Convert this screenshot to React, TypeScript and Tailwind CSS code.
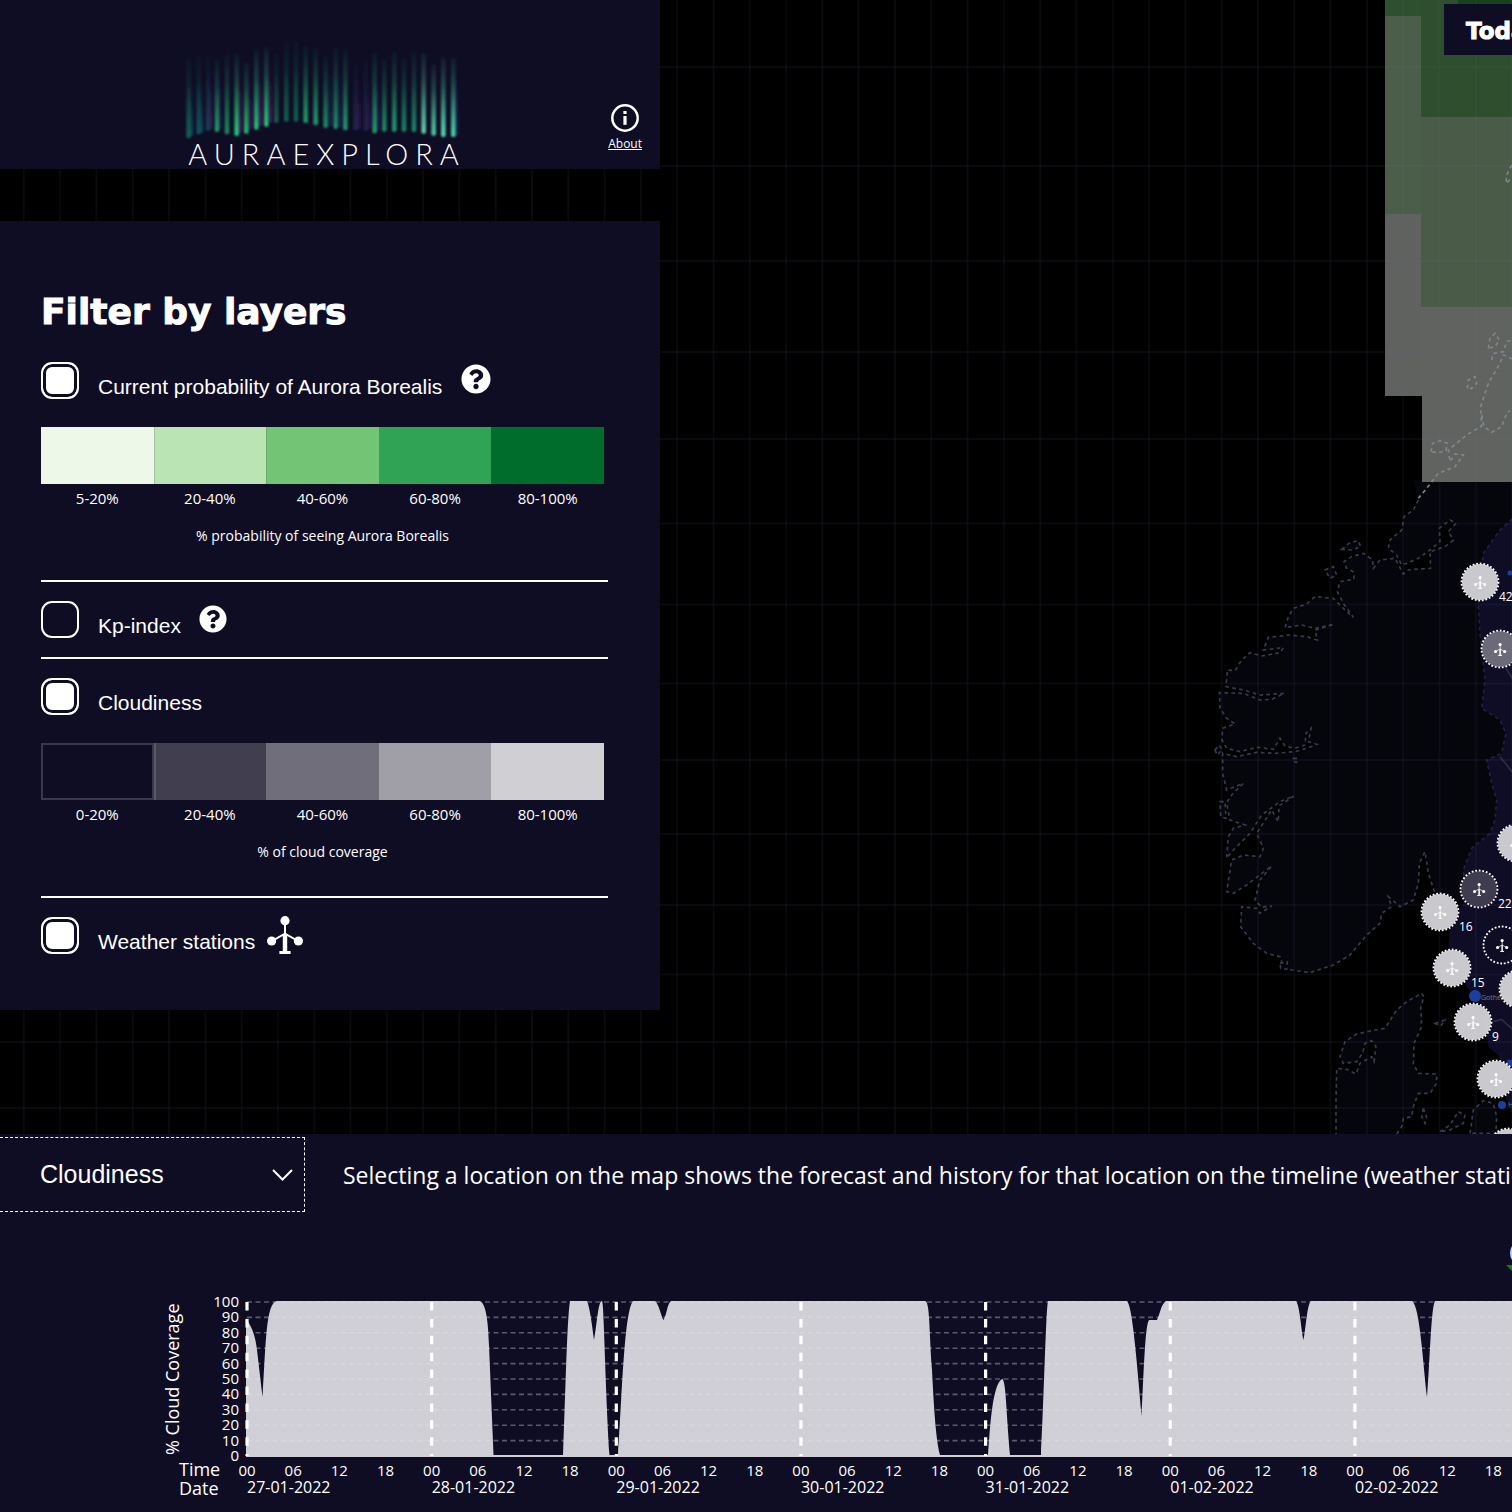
import React, { useState } from "react";

const segoe = "font-['Open_Sans',sans-serif]";

/* ---------- logo ---------- */
type Bar = [x: number, top: number, bottom: number, color: string];
const bars: Bar[] = [
  [87, 110, 352, "#12605a"], [117, 105, 340, "#11535a"], [145, 100, 330, "#173f50"], [172, 115, 333, "#1f9a62"],
  [202, 100, 340, "#1c8560"], [231, 100, 345, "#24c877"], [260, 125, 338, "#22b871"], [290, 85, 326, "#22c077"],
  [320, 78, 317, "#24c47c"], [350, 95, 306, "#15584d"], [380, 62, 302, "#11604f"], [409, 60, 302, "#11604f"],
  [438, 75, 306, "#1a9a66"], [468, 82, 313, "#1d9a68"], [498, 105, 321, "#1c8a62"], [528, 80, 324, "#1c8a66"],
  [557, 85, 328, "#20966a"], [588, 115, 328, "#1d2a44"], [618, 90, 330, "#1d2444"], [645, 95, 337, "#229a6c"],
  [674, 115, 332, "#1d8a62"], [704, 90, 332, "#1f9a6c"], [733, 110, 332, "#1a8560"], [763, 90, 333, "#1f8566"],
  [792, 95, 338, "#5fd0a8"], [822, 130, 344, "#50c8a0"], [851, 110, 348, "#58d8b0"], [881, 110, 348, "#4ad0a4"],
];
const glows: Bar[] = [
  [152, 150, 325, "#36145e"], [242, 150, 335, "#46165a"], [272, 170, 325, "#421254"], [302, 130, 315, "#461658"],
  [332, 130, 305, "#44164e"], [180, 150, 325, "#221650"], [597, 170, 325, "#300f58"], [626, 170, 325, "#300f58"],
  [540, 150, 320, "#162450"], [512, 140, 315, "#162448"], [890, 150, 345, "#162050"], [95, 190, 345, "#143658"],
  [125, 190, 335, "#143658"], [655, 170, 330, "#201a50"],
];

function Logo() {
  const all = [...glows, ...bars];
  return (
    <div className="flex w-[290px] flex-col items-center">
      <svg width="290" height="112" viewBox="43 30 870 336" aria-hidden="true">
        <defs>
          <filter id="soft" x="-200%" width="500%" y="-10%" height="120%">
            <feGaussianBlur stdDeviation="3.6" />
          </filter>
          {all.map(([, , , c], i) => (
            <linearGradient key={i} id={`bar${i}`} x1="0" y1="0" x2="0" y2="1">
              <stop offset="0" stopColor={c} stopOpacity="0.06" />
              <stop offset="0.35" stopColor={c} stopOpacity="0.28" />
              <stop offset="0.75" stopColor={c} stopOpacity="0.75" />
              <stop offset="1" stopColor={c} />
            </linearGradient>
          ))}
        </defs>
        {all.map(([x, t, b], i) => (
          <rect key={i} x={x - 7} y={t} width="14" height={b - t} rx="6" fill={`url(#bar${i})`} filter="url(#soft)" />
        ))}
      </svg>
      <span className="-mt-1 pl-4 font-['Lato',sans-serif] text-[29px] leading-[30px] font-light tracking-[0.24em]">AURAEXPLORA</span>
    </div>
  );
}

/* ---------- icons ---------- */
function InfoIcon() {
  return (
    <svg width="28" height="28" viewBox="0 0 28 28" aria-hidden="true">
      <circle cx="14" cy="14" r="12.7" fill="none" stroke="#fff" strokeWidth="2.5" />
      <rect x="12.4" y="12" width="3.2" height="8.8" fill="#fff" />
      <rect x="12.4" y="7" width="3.2" height="3" fill="#fff" />
    </svg>
  );
}

function HelpIcon({ size }: { size: number }) {
  return (
    <svg width={size} height={size} viewBox="0 0 512 512" aria-hidden="true">
      <path
        fill="#fff"
        d="M504 256c0 136.997-111.043 248-248 248S8 392.997 8 256C8 119.083 119.043 8 256 8s248 111.083 248 248zM262.655 90c-54.497 0-89.255 22.957-116.549 63.758-3.536 5.286-2.353 12.415 2.715 16.258l34.699 26.31c5.205 3.947 12.621 3.008 16.665-2.122 17.864-22.658 30.113-35.797 57.303-35.797 20.429 0 45.698 13.148 45.698 32.958 0 14.976-12.363 22.667-32.534 33.976C247.128 238.528 216 254.941 216 296v4c0 6.627 5.373 12 12 12h56c6.627 0 12-5.373 12-12v-1.333c0-28.462 83.186-29.647 83.186-106.667 0-58.002-60.165-102-116.531-102zM256 338c-25.365 0-46 20.635-46 46 0 25.364 20.635 46 46 46s46-20.636 46-46c0-25.365-20.635-46-46-46z"
      />
    </svg>
  );
}

function StationShape() {
  return (
    <g fill="#fff" stroke="none">
      <circle cx="18" cy="4.7" r="4.6" />
      <circle cx="4.6" cy="25" r="4.6" />
      <circle cx="31.4" cy="25" r="4.6" />
      <path d="M5 25 18 17.6 31 25" fill="none" stroke="#fff" strokeWidth="2" />
      <rect x="17" y="6" width="2" height="14" />
      <rect x="15.8" y="18" width="4.4" height="18" />
      <rect x="12.4" y="35" width="11.2" height="3" />
    </g>
  );
}

/* ---------- map ---------- */
const gridX = Array.from({ length: 60 }, (_, i) => 23.8 + i * 36.3);
const gridY = [67, 166, 261, 352, 439, 523.5, 604.5, 683.5, 760, 834, 905, 974.5, 1042, 1108];

const norway =
  "M655 0 640 30 612 50 605 90 570 120 565 145 590 165 605 195 620 190 655 175 690 150 720 125 718 85 750 60 768 70 745 95 760 120 735 140 690 155 692 205 655 207 625 210 610 222 585 175 540 180 520 205 518 180 490 160 455 170 432 185 440 205 460 215 462 238 420 245 412 275 430 310 460 352 440 335 400 295 345 290 320 312 280 325 265 350 255 383 305 375 345 385 402 373 345 390 352 420 320 410 270 405 205 412 190 450 250 443 240 458 185 468 150 458 125 480 105 512 82 510 78 560 130 570 180 585 253 580 215 598 180 600 130 580 58 578 60 625 80 655 105 672 68 685 66 720 80 745 120 755 170 742 220 748 240 715 255 738 285 745 315 735 318 700 333 685 325 725 350 733 320 745 285 755 225 760 170 757 110 770 68 760 68 820 80 870 130 850 90 890 80 910 90 960 135 975 100 985 85 1010 80 1075 100 1050 150 1000 185 945 240 905 282 888 237 918 235 965 215 930 170 1000 190 1045 180 1070 130 1065 95 1080 80 1175 100 1180 140 1155 215 1098 180 1140 165 1200 185 1222 215 1218 180 1240 170 1225 125 1220 122 1280 160 1330 200 1360 240 1370 250 1400 275 1410 330 1418 400 1395 450 1365 500 1305 540 1270 545 1240 575 1220 565 1190 600 1220 640 1200 655 1150 658 1090 675 1055 685 1120 705 1180 750 1210";
const border =
  "800 1190 790 1110 815 1045 870 1000 885 960 890 900 875 850 860 780 905 760 918 700 900 660 845 625 855 540 840 400 835 310 850 160 900 90 945 50";
const sweden = `M${border} 945 1860 900 1750 900 1670 865 1640 850 1520 800 1460 770 1390 745 1340 750 1280Z`;
const denmark =
  "M408 1910 408 1800 410 1705 440 1708 468 1722 480 1690 515 1670 522 1685 528 1640 515 1622 495 1630 488 1660 470 1685 430 1690 420 1670 435 1625 470 1602 515 1592 555 1585 590 1530 620 1505 665 1480 672 1490 662 1520 665 1580 642 1630 640 1690 655 1720 710 1722 710 1750 690 1780 655 1780 640 1820 635 1850 610 1855 605 1880 585 1910";
const islands = [
  "M425 148 450 128 475 122 482 140 455 150Z",
  "M375 210 400 200 410 225 390 235Z",
  "M45 750 58 735 66 750 52 765Z",
  "M280 775 292 775 290 787 280 785Z",
  "M60 905 75 905 78 955 62 950Z",
  "M240 1390 262 1385 260 1408 242 1405Z",
  "M705 1570 735 1560 722 1578Z",
  "M670 1825 680 1850 675 1870 665 1850Z",
  "M720 1895 750 1875 775 1835 795 1845 790 1870 750 1890Z",
  "M810 1900 820 1830 850 1802 880 1810 890 1850 888 1900Z",
];
const northCoast = [
  "M175 1495 200 1465 235 1420 285 1400 310 1365 285 1362 270 1385 265 1350 320 1305 365 1278 362 1220 385 1150 420 1090 430 1065 460 1078",
  "M213 1355 218 1330 240 1322 262 1330 258 1352 235 1358Z",
  "M322 1165 325 1140 345 1130 350 1150 335 1165Z",
  "M365 1245 372 1280 395 1297 425 1280 440 1240 450 1232",
  "M385 1045 390 1015 405 1000 418 1020 405 1040Z",
  "M395 1080 400 1060 430 1055 440 1025 458 1020",
  "M455 495 440 525 438 550 460 530",
];

type Station = { x: number; y: number; fill: string; id?: string };
const stations: Station[] = [
  { x: 1480, y: 582, fill: "#d0cfd4", id: "42" },
  { x: 1500, y: 649, fill: "#6f6d7c" },
  { x: 1516, y: 843, fill: "#d0cfd4" },
  { x: 1479, y: 889, fill: "#403e4f", id: "22" },
  { x: 1440, y: 912, fill: "#d0cfd4", id: "16" },
  { x: 1502, y: 945, fill: "#0f0d24" },
  { x: 1452, y: 968, fill: "#d0cfd4", id: "15" },
  { x: 1518, y: 989, fill: "#d0cfd4" },
  { x: 1473, y: 1022, fill: "#d0cfd4", id: "9" },
  { x: 1496, y: 1079, fill: "#d0cfd4" },
  { x: 1508, y: 1147, fill: "#d0cfd4" },
];

function WeatherMap() {
  return (
    <svg className="absolute inset-0 h-full w-full" role="img" aria-label="Weather map">
      <rect width="100%" height="100%" fill="#000" />
      <g transform="translate(1200 500) scale(0.33333)" strokeWidth="5" strokeDasharray="11 10" stroke="#393a4b">
        <path d={`${norway} ${border} 945 -60 640 -60Z`} fill="#05050c" stroke="none" />
        <path d={sweden} fill="#0f0c26" stroke="none" />
        <path d={norway} fill="none" />
        <path d={`M${border}`} fill="none" stroke="#22213a" />
        <path d={denmark} fill="#05050c" />
        {islands.map((d) => (
          <path key={d} d={d} fill="#05050c" />
        ))}
        <path d="M918 505 940 540M900 770 940 820M880 1565 905 1558 940 1590" fill="none" strokeDasharray="none" stroke="#2c2c44" />
      </g>
      <g>
        <rect x="1385" y="0" width="37" height="16" fill="#2f502f" />
        <rect x="1421" y="0" width="700" height="117" fill="#2e4e2d" />
        <rect x="1458" y="0" width="700" height="5" fill="#17421c" />
        <rect x="1385" y="16" width="36" height="198" fill="#4b5e49" />
        <rect x="1421" y="117" width="700" height="190" fill="#4a5b47" />
        <rect x="1385" y="214" width="36" height="182" fill="#5f625f" />
        <rect x="1421" y="307" width="700" height="89" fill="#60635f" />
        <rect x="1422" y="396" width="700" height="86" fill="#60635f" />
      </g>
      <g transform="translate(1360 0) scale(0.33333)" fill="none" stroke="#81868c" strokeWidth="5" strokeDasharray="11 10">
        {northCoast.map((d) => (
          <path key={d} d={d} />
        ))}
      </g>
      <g stroke="#7070b0" strokeOpacity="0.08" strokeWidth="2">
        {gridX.map((x) => (
          <line key={x} x1={x} x2={x} y1="0" y2="100%" />
        ))}
        {gridY.map((y) => (
          <line key={y} x1="0" x2="100%" y1={y} y2={y} />
        ))}
      </g>
      <g fill="#1b3f9f">
        <circle cx="1475" cy="996" r="6" />
        <circle cx="1510" cy="573" r="2.5" />
        <circle cx="1510" cy="957" r="3" />
        <circle cx="1510" cy="1063" r="3.5" />
        <circle cx="1502" cy="1105" r="4" />
      </g>
      <g className={segoe} fill="#77778a" fontSize="7">
        <text x="1481" y="1000">Gothenburg</text>
        <text x="1508" y="1107">Halmstad</text>
      </g>
      {stations.map((s) => (
        <g key={`${s.x}-${s.y}`}>
          <circle cx={s.x} cy={s.y} r="18" fill={s.fill} fillOpacity="0.97" />
          <circle cx={s.x} cy={s.y} r="18.5" fill="none" stroke="#fff" strokeWidth="1.8" strokeDasharray="1.8 1.8" />
          <g transform={`translate(${s.x - 6} ${s.y - 6}) scale(0.34)`}>
            <StationShape />
          </g>
          {s.id && (
            <text x={s.x + 19} y={s.y + 19} fontSize="12" fill="#fff" className={segoe}>
              {s.id}
            </text>
          )}
        </g>
      ))}
    </svg>
  );
}

/* ---------- filter panel ---------- */
function LayerToggle({ id, label, initial, children }: { id: string; label: string; initial: boolean; children?: React.ReactNode }) {
  const [on, setOn] = useState(initial);
  return (
    <div className="flex h-[37px] items-end">
      <input
        id={id}
        type="checkbox"
        checked={on}
        onChange={() => setOn(!on)}
        className="h-[37px] w-[38px] appearance-none rounded-[11px] border-2 border-white checked:bg-white checked:shadow-[inset_0_0_0_3px_#0f0d24]"
      />
      <label htmlFor={id} className="ml-[19px] text-[21px] leading-6">
        {label}
      </label>
      {children}
    </div>
  );
}

function Legend({ items, caption }: { items: [string, string][]; caption: string }) {
  return (
    <div className={`mr-1 mt-7 ${segoe}`}>
      <ul className="grid grid-cols-5">
        {items.map(([label, cls]) => (
          <li key={label} className="text-center text-[15px] leading-7">
            <div className={`h-[57px] ${cls}`} />
            {label}
          </li>
        ))}
      </ul>
      <p className="mt-2.5 text-center text-[14px] leading-7">{caption}</p>
    </div>
  );
}

function Divider() {
  return <hr className="border-t-2 border-white" />;
}

/* ---------- timeline chart ---------- */
const days = ["27-01-2022", "28-01-2022", "29-01-2022", "30-01-2022", "31-01-2022", "01-02-2022", "02-02-2022", "03-02-2022", "04-02-2022"];
const X0 = 247;
const DAY = 184.65;
const levels = [100, 90, 80, 70, 60, 50, 40, 30, 20, 10, 0];
const coverage =
  "M246 1318 C252 1328 255 1334 257 1350 L262.5 1397 C266 1340 266 1303 277 1301 H479 C485 1302 488 1315 489 1345 L493.5 1455 H563 C566 1380 567 1320 570 1301 H587 C590 1308 592 1325 594 1340 C597 1325 598 1301 602 1301 C604 1301 605 1380 609.5 1455 H618 C622 1400 624 1312 633 1301 H655 C659 1304 661 1316 663.5 1320 C667 1314 667 1304 671 1301 H925 C930 1301 929 1330 932 1370 C934 1410 936 1440 940 1455 H988 C990 1430 992 1385 1002 1379 C1006 1379 1006 1410 1010 1455 H1041 C1044 1400 1046 1310 1048 1301 H1127 C1132 1306 1136 1350 1141.500 1416 C1144 1370 1145 1325 1149 1320 H1157 C1160 1314 1161 1304 1166 1301 H1296 C1300 1306 1301 1330 1303.500 1340 C1306 1328 1307 1304 1311 1301 H1412 C1420 1306 1423 1365 1427 1397 C1430 1360 1431 1308 1435 1301 H1908 V1457 H246 Z";

function CoverageChart() {
  return (
    <svg width="1908" height="300" viewBox="0 1212 1908 300" className={`max-w-none shrink-0 ${segoe}`} fill="#fff" fontSize="15" role="img" aria-label="Cloud coverage over time">
      <path d={coverage} fill="#d0cfd6" />
      {levels.map((v) => {
        const y = 1456 - v * 1.54;
        return (
          <g key={v}>
            {v > 0 && <line x1={X0} x2="1908" y1={y} y2={y} stroke="#e4e4ee" strokeOpacity="0.36" strokeWidth="1.6" strokeDasharray="5 3.500" />}
            <text x="239" y={y + 5} textAnchor="end">
              {v}
            </text>
          </g>
        );
      })}
      {days.map((d, i) => {
        const x = X0 + i * DAY;
        return (
          <g key={d}>
            <line x1={x} x2={x} y1="1302" y2="1456" stroke="#fff" strokeWidth="3.2" strokeDasharray="8.500 8.400" />
            {["00", "06", "12", "18"].map((h, k) => (
              <text key={h} x={x + (k * DAY) / 4} y="1476" textAnchor="middle">
                {h}
              </text>
            ))}
            <text x={x} y="1493" fontSize="16">
              {d}
            </text>
          </g>
        );
      })}
      <g fontSize="18">
        <text x="179" y="1476">Time</text>
        <text x="179" y="1495">Date</text>
        <text transform="translate(179 1455) rotate(-90)">% Cloud Coverage</text>
      </g>
      <circle cx="1523" cy="1253" r="12" fill="none" stroke="#b9d4ff" strokeWidth="2" />
      <path d="M1506 1265H1540L1523 1282Z" fill="#108010" />
    </svg>
  );
}

export default function App() {
  const [metric, setMetric] = useState("Cloudiness");
  return (
    <div className="overflow-hidden bg-[#0f0d24] font-['Liberation_Sans',Arial,sans-serif] text-white">
      <main className="relative overflow-hidden pb-[124px]">
        <WeatherMap />
        <div className="absolute left-[1444px] top-1 bg-[#0f0d24] px-[22px] pt-3 pb-2 font-['DejaVu_Sans',sans-serif] text-[23px] leading-[31px] font-bold [-webkit-text-stroke:1px_white]">
          Today
        </div>

        <div className="relative w-[660px] max-w-full">
          <header className="flex h-[169px] items-end justify-between bg-[#0f0d24] pl-[174px] pr-[18px]">
            <Logo />
            <a href="#about" className={`mb-4 flex flex-col items-center text-[12px] leading-[18px] underline ${segoe}`}>
              <InfoIcon />
              <span className="mt-[3px]">About</span>
            </a>
          </header>

          <section className="mt-[52px] bg-[#0f0d24] pb-14 pl-[41px] pr-[52px] pt-[67px]">
            <h1 className="mb-[26px] font-['DejaVu_Sans',sans-serif] text-[36px] leading-[48px] font-bold [-webkit-text-stroke:1px_white]">Filter by layers</h1>
            <LayerToggle id="aurora" label="Current probability of Aurora Borealis" initial>
              <button type="button" aria-label="About aurora probability" className="ml-[19px] self-start pt-0.5">
                <HelpIcon size={30} />
              </button>
            </LayerToggle>
            <Legend
              caption="% probability of seeing Aurora Borealis"
              items={[
                ["5-20%", "bg-[#edf8e9]"],
                ["20-40%", "bg-[#bae4b3] border-l border-[#9cc79a]"],
                ["40-60%", "bg-[#74c476] border-l border-[#66ab6a]"],
                ["60-80%", "bg-[#31a354]"],
                ["80-100%", "bg-[#006d2c]"],
              ]}
            />
            <div className="h-[30px]" />
            <Divider />
            <div className="pb-[19px] pt-[19px]">
              <LayerToggle id="kp" label="Kp-index" initial={false}>
                <button type="button" aria-label="About Kp-index" className="ml-[18px] self-start pt-1">
                  <HelpIcon size={28} />
                </button>
              </LayerToggle>
            </div>
            <Divider />
            <div className="pt-[19px]">
              <LayerToggle id="clouds" label="Cloudiness" initial />
            </div>
            <Legend
              caption="% of cloud coverage"
              items={[
                ["0-20%", "border-2 border-[#3a384a]"],
                ["20-40%", "bg-[#403e4f] border-l-2 border-[#5a5868]"],
                ["40-60%", "bg-[#706e7b]"],
                ["60-80%", "bg-[#a09fa8]"],
                ["80-100%", "bg-[#d0cfd4]"],
              ]}
            />
            <div className="h-[30px]" />
            <Divider />
            <div className="pt-[19px]">
              <LayerToggle id="stations" label="Weather stations" initial>
                <svg width="36" height="38" viewBox="0 0 36 38" className="ml-3" aria-hidden="true">
                  <StationShape />
                </svg>
              </LayerToggle>
            </div>
          </section>
        </div>
      </main>

      <section className="pt-[3px]">
        <div className="flex items-center">
          <div className="relative w-[305px] shrink-0">
            <select
              aria-label="Timeline metric"
              value={metric}
              onChange={(e) => setMetric(e.target.value)}
              className="h-[75px] w-full appearance-none border border-l-0 border-dashed border-white bg-[#0f0d24] pl-10 text-[25px]"
            >
              <option>Cloudiness</option>
              <option>Kp-index</option>
            </select>
            <svg className="pointer-events-none absolute right-3 top-8" width="21" height="12" viewBox="0 0 21 12" fill="none" stroke="#fff" strokeWidth="2" aria-hidden="true">
              <path d="M1 1 10.500 10.500 20 1" />
            </svg>
          </div>
          <p className={`ml-[38px] whitespace-nowrap text-[23px] leading-8 ${segoe}`}>
            Selecting a location on the map shows the forecast and history for that location on the timeline (weather station)
          </p>
        </div>
        <div className="flex overflow-hidden">
          <CoverageChart />
        </div>
      </section>
    </div>
  );
}
